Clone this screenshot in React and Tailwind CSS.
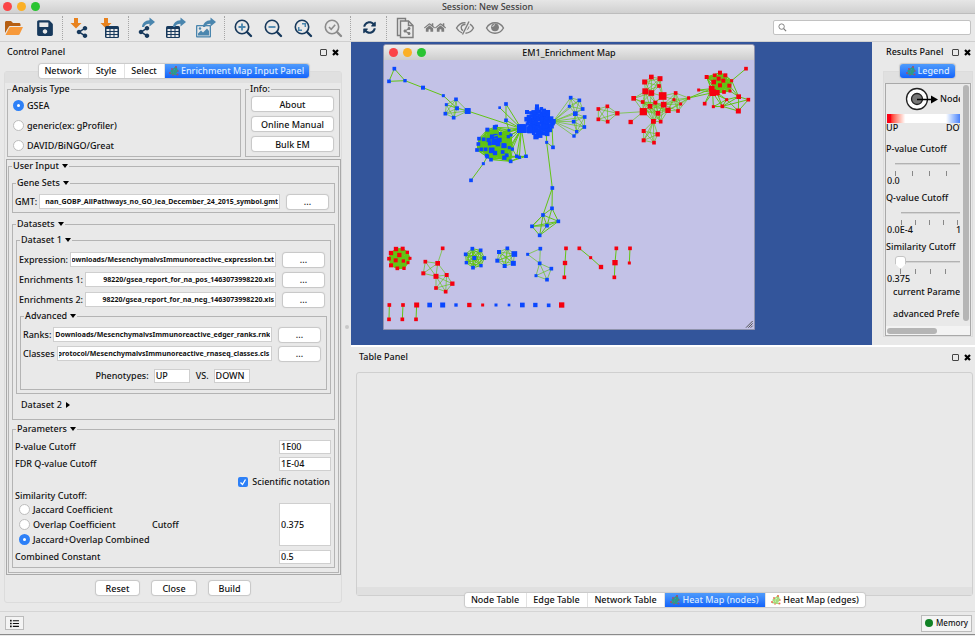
import React from "react";
import { FaSave, FaShareAlt, FaHome, FaSyncAlt, FaList } from "react-icons/fa";

/* ---------- network drawing ---------- */

const GREEN = "#62c414";
const BLUE = "#0a47ff";
const RED = "#f5000f";

function Cluster({ color, nodes, edges = [], clique = [], dx = 0, dy = 0, width = 3 }) {
  const lines = [...edges];
  clique.forEach(([from, to]) => {
    for (let i = from; i <= to; i++) for (let j = i + 1; j <= to; j++) lines.push([i, j]);
  });
  return (
    <g transform={`translate(${dx} ${dy})`}>
      <path
        d={lines.map(([a, b]) => `M${nodes[a][0]} ${nodes[a][1]}L${nodes[b][0]} ${nodes[b][1]}`).join("")}
        stroke={GREEN}
        strokeWidth={width}
        fill="none"
      />
      {nodes.map(([x, y, s = 11, c = color], i) => (
        <rect key={i} x={x - s / 2} y={y - s / 2} width={s} height={s} fill={c} />
      ))}
    </g>
  );
}

const core = Array.from({ length: 60 }, (_, i) => {
  const r = 40 * Math.sqrt((i + 1) / 60);
  const a = i * 2.39996;
  return [479 + r * Math.cos(a), 187 + r * Math.sin(a) * 1.05, i % 3 === 0 ? 10 : 14];
});

const pathway = [
  [322, 209, 12], [345, 202, 13], [311, 238], [297, 236], [326, 240, 13], [336, 230, 13], [347, 228, 13],
  [358, 240, 14], [344, 245, 20], [354, 252, 14], [295, 252], [329, 251], [372, 257, 15], [361, 221, 9],
  [388, 263, 9], [291, 270], [304, 268], [317, 268], [335, 271, 17], [368, 276], [345, 279, 13], [320, 287],
  [333, 299], [373, 293, 13], [380, 286, 9], [392, 304], [385, 230, 9], [393, 225, 8], [387, 211, 8],
  [397, 267, 9], [410, 289, 10], [418, 292, 9], [438, 289, 10], [424, 206, 26], [349, 199, 10],
];

const hubX = [
  [424, 206, 26], [378, 132], [359, 143, 8], [378, 181], [387, 211, 8], [385, 230, 9], [393, 225, 8],
  [410, 289, 10], [418, 292, 9], [438, 289, 10], [372, 257, 14], [388, 263, 9], [397, 267, 9], [263, 153, 17],
  [361, 221, 9], [345, 202], [336, 230], [380, 286],
];

function Network() {
  return (
    <svg viewBox="0 0 1110 807" className="block w-full" role="img" aria-label="Enrichment map network">
      <Cluster
        dx={-12}
        color={BLUE}
        nodes={[[43, 26], [27, 64], [75, 62, 10], [129, 83, 12], [190, 107, 9], [231, 145]]}
        edges={[[0, 1], [0, 2], [1, 2], [2, 3], [3, 4], [4, 5]]}
      />
      <Cluster
        dx={-12}
        color={BLUE}
        nodes={[[228, 118], [199, 134, 9], [231, 145], [196, 161], [221, 173], [263, 153, 17]]}
        clique={[[0, 5]]}
        width={2}
      />
      <Cluster dx={-12} color={BLUE} nodes={pathway} clique={[[0, 29]]} edges={[[25, 32], [25, 31], [29, 30], [30, 32], [21, 30], [22, 30], [23, 32]]} />
      <Cluster dx={-12} color={BLUE} nodes={hubX} edges={hubX.slice(1).map((_, i) => [0, i + 1]).concat([[1, 3], [3, 4]])} />
      <Cluster dx={-12} color={BLUE} nodes={[[322, 290], [310, 311, 9], [273, 361]]} edges={[[0, 1], [1, 2]]} />
      <Cluster
        dx={-12}
        color={BLUE}
        width={2}
        nodes={[
          [572, 113], [598, 121], [568, 139, 9], [608, 147], [586, 161, 14], [614, 171], [581, 185],
          [613, 201], [590, 215, 10], [582, 228, 10], [520, 184, 14],
        ]}
        clique={[[0, 4], [4, 8]]}
        edges={[0, 1, 2, 3, 4, 5, 6, 7, 8, 9].map((i) => [i, 10]).concat([[8, 9], [7, 9]])}
      />
      <Cluster
        dx={-12}
        color={BLUE}
        nodes={[[497, 180], [500, 247, 9], [519, 262], [516, 200], [517, 384], [516, 445], [489, 465], [456, 499], [501, 497], [535, 484], [479, 526]]}
        edges={[[0, 1], [1, 2], [2, 3], [1, 4], [4, 5], [4, 6], [5, 6], [5, 8], [5, 9], [6, 7], [6, 8], [6, 9], [7, 8], [7, 9], [7, 10], [8, 9], [8, 10], [9, 10], [6, 10], [7, 6]]}
      />
      <Cluster dx={-12} color={BLUE} nodes={[...core, [441, 156, 12], [471, 139, 12], [468, 230, 16], [519, 184, 14], [428, 206, 25], [449, 210, 18]]} />

      <Cluster
        dx={618}
        color={RED}
        nodes={[[52, 139], [25, 147], [25, 178], [53, 185], [82, 160, 13], [160, 155, 21], [122, 186, 13]]}
        clique={[[0, 4]]}
        edges={[[4, 5], [5, 6]]}
        width={2}
      />
      <Cluster
        dx={618}
        color={RED}
        width={2}
        nodes={[
          [184, 51, 14], [210, 56, 15], [164, 66, 15], [207, 78], [166, 94, 18], [184, 99, 17], [218, 108, 23],
          [131, 115, 14], [158, 126], [180, 139, 14], [196, 128, 12], [221, 134, 17], [204, 160, 14],
          [234, 151, 16], [190, 184, 14], [212, 185], [160, 155, 21], [257, 99], [252, 119, 9], [272, 132, 9],
          [264, 153], [296, 114, 9],
        ]}
        clique={[[0, 5], [8, 15], [17, 21]]}
        edges={[
          [6, 1], [6, 3], [6, 5], [6, 11], [6, 10], [6, 17], [6, 18], [6, 9], [7, 4], [7, 5], [7, 8], [7, 16], [7, 9],
          [16, 4], [16, 8], [16, 9], [16, 10], [16, 12], [16, 14], [16, 11], [4, 8], [4, 9], [5, 10], [5, 9], [8, 5],
          [13, 17], [13, 18], [13, 19], [13, 20], [11, 17], [11, 19], [11, 18], [11, 20], [13, 21], [11, 21], [16, 13], [4, 10],
        ]}
      />
      <Cluster
        dx={618}
        color={RED}
        width={2}
        nodes={[[190, 184, 14], [161, 213, 12], [203, 223, 13], [161, 241, 12], [192, 248, 11], [180, 215, 1, GREEN]]}
        clique={[[0, 4]]}
        edges={[[5, 0], [5, 3], [5, 4]]}
      />
      <Cluster
        dx={618}
        color={RED}
        nodes={[
          [390, 38, 12], [374, 46], [406, 46, 12], [350, 51, 12], [386, 56, 12], [371, 66, 14], [400, 62, 12],
          [390, 76, 12], [418, 77, 12], [365, 86, 17], [368, 98, 20], [381, 98, 16], [402, 96], [425, 62, 9], [420, 93, 9],
          [468, 26], [326, 90, 9], [296, 114, 9], [344, 131], [370, 140, 9], [397, 139], [410, 119, 9],
          [446, 110, 14], [475, 119], [445, 153, 15],
        ]}
        clique={[[0, 14]]}
        edges={[[13, 15], [16, 10], [17, 10], [17, 9], [16, 9], [18, 10], [19, 10], [20, 10], [21, 10], [21, 11], [20, 11], [13, 22], [14, 22], [22, 23], [22, 24], [23, 24], [20, 22], [21, 24], [20, 24], [20, 21], [19, 21], [21, 22], [20, 23], [18, 9], [8, 22], [19, 20]]}
        width={3}
      />

      <Cluster
        dx={-12}
        dy={360}
        color={RED}
        width={4}
        nodes={[
          [48, 207, 13], [68, 206, 12], [33, 219, 13], [82, 217, 10], [58, 225, 13], [27, 236], [90, 235, 9], [47, 241, 12],
          [70, 243, 10], [84, 248, 9], [33, 256, 12], [52, 265], [72, 265, 10],
        ]}
        clique={[[0, 12]]}
      />
      <Cluster
        dx={-12}
        dy={360}
        color={RED}
        width={2}
        nodes={[[188, 205], [173, 250, 14], [136, 245], [130, 280, 12], [168, 289, 15], [200, 285, 12], [217, 311, 13], [168, 324], [197, 335]]}
        clique={[[1, 4], [4, 8]]}
        edges={[[0, 1], [1, 5]]}
      />
      <Cluster
        dx={-12}
        dy={360}
        color={BLUE}
        width={3}
        nodes={[[277, 206], [302, 211], [257, 223], [313, 234], [283, 234, 12], [259, 248, 10], [303, 257, 10], [279, 263]]}
        clique={[[0, 7]]}
      />
      <Cluster
        dx={-12}
        dy={360}
        color={BLUE}
        width={2}
        nodes={[[382, 205], [357, 216, 12], [403, 222, 17], [352, 242, 12], [400, 250, 15], [374, 258, 12], [380, 232, 1, GREEN]]}
        clique={[[0, 6]]}
      />
      <Cluster
        dx={-12}
        dy={360}
        color={BLUE}
        nodes={[[481, 206], [443, 223, 9], [479, 250], [514, 266], [468, 287, 9], [501, 299]]}
        clique={[[0, 2], [2, 5]]}
        width={2}
      />
      <Cluster
        dx={-12}
        dy={360}
        color={RED}
        nodes={[
          [558, 205], [555, 249, 13], [553, 292], [598, 205], [632, 233, 9], [663, 261, 13], [709, 205], [705, 248, 16],
          [703, 292], [750, 205], [748, 249, 9], [28, 375], [27, 418], [69, 375], [67, 418], [110, 375, 15], [108, 418],
        ]}
        edges={[[0, 1], [1, 2], [3, 4], [4, 5], [6, 7], [7, 8], [9, 10], [11, 12], [13, 14], [15, 16]]}
      />
      <Cluster
        dx={-12}
        dy={360}
        color={BLUE}
        nodes={[
          [149, 375, 14], [188, 375, 15], [228, 375, 10], [268, 375, 13, RED], [308, 375, 9, RED], [348, 375, 9],
          [387, 375, 8], [427, 375, 14], [466, 375, 13], [506, 376, 11], [545, 375, 16, RED],
        ]}
      />
      <path d="M1086 803l20-20M1093 803l13-13M1100 803l6-6" stroke="#555" strokeWidth="3" />
    </svg>
  );
}

/* ---------- toolbar icons ---------- */

const NAVY = "#17395c";
const STEEL = "#4a86ae";
const ORANGE = "#e8821e";
const GRAY = "#7d7d7d";

const Icon = ({ children }) => (
  <svg viewBox="0 0 24 24" className="block size-6" aria-hidden="true">
    {children}
  </svg>
);

const DownArrow = () => <path d="M6 1h4v5h3.500L8 11.500 2.500 6H6z" transform="translate(-1 1)" fill={ORANGE} />;
const CurveArrow = () => (
  <path d="M14.500 1.500L20 6l-5.500 4.500V7.800c-3 0-4.500 1-5.500 3.200-.8 0-1.500 0-2 0C7.300 7 10 4.400 14.500 4.200z" fill={STEEL} />
);

const FolderIcon = () => (
  <Icon>
    <path d="M2 17V6.500C2 5.600 2.600 5 3.500 5H8l2 2h6c.900 0 1.500.6 1.500 1.500V10H7.500c-1 0-1.600.4-2 1.200z" fill="#b55e12" />
    <path d="M2.500 19l3.700-7.200c.3-.6.8-.8 1.300-.8H20l-3.400 7.200c-.3.5-.7.8-1.300.8z" fill="#f7993a" />
  </Icon>
);

const Share = ({ x, y }) => <FaShareAlt x={x} y={y} size={12} color={NAVY} />;
const Grid = ({ x, y }) => (
  <g transform={`translate(${x} ${y})`}>
    <rect width="14" height="12" rx="1.500" fill={NAVY} />
    <path d="M1.500 3h3v2h-3zM5.500 3h3v2h-3zM9.500 3h3v2h-3zM1.500 6h3v2h-3zM5.500 6h3v2h-3zM9.500 6h3v2h-3zM1.500 9h3v2h-3zM5.500 9h3v2h-3zM9.500 9h3v2h-3z" fill="#e9e9e9" />
  </g>
);

const ImportNetwork = () => (
  <Icon>
    <DownArrow />
    <Share x={7} y={10} />
  </Icon>
);
const ImportTable = () => (
  <Icon>
    <DownArrow />
    <Grid x={6} y={10} />
  </Icon>
);
const ExportNetwork = () => (
  <Icon>
    <Share x={3} y={10} />
    <CurveArrow />
  </Icon>
);
const ExportTable = () => (
  <Icon>
    <Grid x={1} y={10} />
    <g transform="translate(1 0)">
      <CurveArrow />
    </g>
  </Icon>
);
const ExportImage = () => (
  <Icon>
    <rect x="1" y="9" width="15" height="12.500" rx="1" fill={STEEL} />
    <rect x="2.300" y="10.300" width="12.400" height="9.900" fill="#e9e9e9" />
    <path d="M3 19.500v-2l3-3 2 2 4-4 2 2.500v4.500z" fill={STEEL} />
    <circle cx="5" cy="12.500" r="1.200" fill={STEEL} />
    <g transform="translate(1 0)">
      <CurveArrow />
    </g>
  </Icon>
);

const Magnifier = ({ color = NAVY, children }) => (
  <Icon>
    <circle cx="11" cy="11" r="6.700" fill="none" stroke={color} strokeWidth="1.600" />
    <path d="M16 16l4 4" stroke={color} strokeWidth="2.400" strokeLinecap="round" />
    {children}
  </Icon>
);
const ZoomIn = () => (
  <Magnifier>
    <path d="M11 7.500v7M7.500 11h7" stroke={STEEL} strokeWidth="1.800" />
  </Magnifier>
);
const ZoomOut = () => (
  <Magnifier>
    <path d="M7.500 11h7" stroke={STEEL} strokeWidth="1.800" />
  </Magnifier>
);
const ZoomFit = () => (
  <Magnifier>
    <path d="M11 7.700h3.300V11M11 14.300H7.700V11" fill="none" stroke={STEEL} strokeWidth="1.500" />
  </Magnifier>
);
const ZoomSelected = () => (
  <Magnifier color="#8c8c8c">
    <path d="M8 11l2.200 2.300 4-4.600" fill="none" stroke="#8c8c8c" strokeWidth="1.600" />
  </Magnifier>
);
const CopyNetwork = () => (
  <Icon>
    <g fill="none" stroke={GRAY} strokeWidth="1.400">
      <path d="M7 19.500H4.500v-17h8V5" />
      <path d="M7.500 5h8l4.500 4.500v12H7.500z" fill="#e9e9e9" />
      <path d="M15.500 5v4.500H20" />
    </g>
    <FaShareAlt x={10} y={11} size={8} color={GRAY} />
  </Icon>
);
const Houses = () => (
  <Icon>
    <FaHome x={1} y={6} size={11} color={GRAY} />
    <FaHome x={12} y={6} size={11} color={GRAY} />
  </Icon>
);
const EyeIcon = () => (
  <Icon>
    <path d="M3.500 12C5.500 8.500 8.500 6.800 12 6.800s6.500 1.700 8.500 5.200c-2 3.500-5 5.200-8.500 5.200S5.500 15.500 3.500 12z" fill="none" stroke={GRAY} strokeWidth="1.400" />
    <circle cx="12" cy="11.300" r="3.900" fill={GRAY} />
    <path d="M9.800 11c0-1.300.9-2.200 2.200-2.200" fill="none" stroke="#e9e9e9" strokeWidth=".9" />
  </Icon>
);
const HiddenEyeIcon = () => (
  <Icon>
    <path d="M12.500 6.800C8.800 6.500 5.500 8.500 3.500 12c1.400 2.500 3.200 4 5.500 4.800M17 8.200c1.400.9 2.600 2.200 3.500 3.800-1.800 3.200-4.600 5-8 5.200" fill="none" stroke={GRAY} strokeWidth="1.400" />
    <path d="M12.500 8.500c-2.300-.4-4.200 1-4.300 3 0 1.500.7 2.500 1.800 3.100" fill="none" stroke={GRAY} strokeWidth="1.400" />
    <path d="M16 5.500L9.500 18.500" stroke={GRAY} strokeWidth="1.400" />
    <path d="M16.300 9.500c.3 2.300-.7 4-2.800 5z" fill={GRAY} />
  </Icon>
);

const EnrichIcon = ({ faint }) => (
  <svg viewBox="0 0 10 10" className="size-[10px] shrink-0" aria-hidden="true">
    <path d="M7 1L2 5l3 3 3.500-3L7 1 5 8M2 5h6.500M1 7.500l4 .5 3 .5" stroke={faint ? "#a5dc7c" : "#2f9a83"} strokeWidth="1.300" fill="none" />
    <g fill={faint ? "#ec6a50" : "#a84a70"}>
      <circle cx="7" cy="1" r="1" />
      <circle cx="3" cy="3" r=".9" />
      <circle cx="1" cy="7" r="1" />
      <circle cx="4" cy="9" r=".8" />
      <circle cx="9" cy="5" r=".8" />
      <circle cx="8.500" cy="8.500" r="1" />
    </g>
  </svg>
);

/* ---------- controls ---------- */

const ToolButton = ({ label, children }) => (
  <button type="button" aria-label={label} className="flex w-[30px] shrink-0 items-center justify-center">
    {children}
  </button>
);
const Separator = () => <div className="ml-[2px] mr-[3px] h-6 shrink-0 border-l border-dotted border-[#a5a5a5]" />;

const Lights = () => (
  <div className="flex gap-[5px]">
    <span className="size-[9px] rounded-full bg-[#fb4647]" />
    <span className="size-[9px] rounded-full bg-[#fbb026]" />
    <span className="size-[9px] rounded-full bg-[#2ac432]" />
  </div>
);

const PanelHeader = ({ title }) => (
  <div className="flex h-5 items-center gap-[5px] pr-[4px]">
    <h2 className="mr-auto whitespace-nowrap">{title}</h2>
    <button type="button" aria-label={`Float ${title}`} className="size-[7px] rounded-[1px] border border-[#444]" />
    <button type="button" aria-label={`Close ${title}`}>
      <svg viewBox="0 0 7 7" className="size-[7px]">
        <path d="M1 1l5 5M6 1L1 6" stroke="#000" strokeWidth="2.200" />
      </svg>
    </button>
  </div>
);

const Tab = ({ width, selected, icon, children }) => (
  <button
    type="button"
    role="tab"
    aria-selected={!!selected}
    className={`flex h-[14px] items-center justify-center gap-[2px] whitespace-nowrap border-r border-[#e2e2e2] last:border-r-0 ${width} ${
      selected ? "bg-linear-to-b from-[#4f9bfb] to-[#1463fb] text-[#dcebff]" : "bg-white"
    }`}
  >
    {icon}
    {children}
  </button>
);
const Tabs = ({ children }) => (
  <div role="tablist" className="flex overflow-hidden rounded-[3px] shadow-[0_0_1px_1px_#c9c9c9]">
    {children}
  </div>
);

const Push = ({ width, label, children }) => (
  <button
    type="button"
    aria-label={label}
    className={`h-[14px] shrink-0 rounded-[3px] bg-white leading-[13px] shadow-[0_0_1px_1px_#c6c6c6] ${width}`}
  >
    {children}
  </button>
);

const Radio = ({ name, label, checked }) => (
  <label className="flex h-[15px] items-center gap-[3px] whitespace-nowrap">
    <input
      type="radio"
      name={name}
      defaultChecked={checked}
      className="size-[11px] shrink-0 appearance-none rounded-full border border-[#bdbdbd] bg-white checked:border-4 checked:border-[#2d80f7]"
    />
    {label}
  </label>
);

const Group = ({ title, open, className = "", inner = "", children }) => (
  <fieldset className={`min-w-0 border border-[#b4b4b4] ${className}`}>
    <legend className="ml-[3px] h-3 px-[1px] leading-3">
      {title}
      {open && <span className="ml-[3px] inline-block border-x-[3px] border-t-4 border-x-transparent border-t-black align-[1px]" />}
    </legend>
    <div className={inner}>{children}</div>
  </fieldset>
);

const showEnd = (el) => {
  if (el) el.scrollLeft = el.scrollWidth;
};

const FileRow = ({ id, label, value }) => (
  <div className="flex h-[15px] items-center pl-[2px] pr-[6px]">
    <label htmlFor={id} className="mr-[2px] whitespace-nowrap">
      {label}
    </label>
    <input
      id={id}
      ref={showEnd}
      defaultValue={value}
      className="mr-[7px] h-[15px] min-w-0 flex-1 border border-[#cfcfcf] bg-white px-[1px] text-right text-[7px] font-bold"
    />
    <Push width="w-[41px]" label={`Browse ${label}`}>
      ...
    </Push>
  </div>
);

const Field = ({ id, value, className }) => (
  <input id={id} defaultValue={value} className={`border border-[#cfcfcf] bg-white px-[1px] ${className}`} />
);

/* ---------- panels ---------- */

const ControlPanel = () => (
  <aside className="flex w-[343px] shrink-0 flex-col">
    <div className="pl-[7px]">
      <PanelHeader title="Control Panel" />
    </div>
    <div className="relative z-10 mt-[2px] flex justify-center pl-[4px]">
      <Tabs>
        <Tab width="w-[50px]">Network</Tab>
        <Tab width="w-[36px]">Style</Tab>
        <Tab width="w-[40px]">Select</Tab>
        <Tab width="w-[144px]" selected icon={<EnrichIcon />}>
          Enrichment Map Input Panel
        </Tab>
      </Tabs>
    </div>
    <div className="-mt-[7px] ml-1 mr-[1px] mb-2 flex-1 rounded-[3px] border border-[#dcdcdc] bg-[#e9e9e9]">
      <div className="h-[11px] bg-[#e0e0e0]" />
      <div className="flex gap-[4px] pl-[2px] pr-[1px]">
        <Group title="Analysis Type" className="flex-1" inner="flex flex-col gap-[5px] pl-[5px] pt-[3px] pb-[3px]">
          <Radio name="analysis" label="GSEA" checked />
          <Radio name="analysis" label="generic(ex: gProfiler)" />
          <Radio name="analysis" label="DAVID/BiNGO/Great" />
        </Group>
        <Group title="Info:" className="w-[95px]" inner="flex flex-col items-center gap-[6px] pt-[2px]">
          <Push width="w-[81px]">About</Push>
          <Push width="w-[81px]">Online Manual</Push>
          <Push width="w-[81px]">Bulk EM</Push>
        </Group>
      </div>
      <div className="mt-[2px] ml-[1px] border border-[#a9a9a9] px-[1px] pb-[1px]">
        <Group title="User Input" open inner="px-[3px] pb-[4px] pt-[5px]">
          <Group title="Gene Sets" open inner="pb-[3px] pt-[5px]">
            <FileRow id="gmt" label="GMT:" value="nan_GOBP_AllPathways_no_GO_iea_December_24_2015_symbol.gmt" />
          </Group>
          <Group title="Datasets" open className="mt-[5px]" inner="px-[3px] pt-1">
            <Group title="Dataset 1" open inner="pb-[3px] pt-[6px]">
              <div className="flex flex-col gap-[5px]">
                <FileRow id="expr" label="Expression:" value="Downloads/MesenchymalvsImmunoreactive_expression.txt" />
                <FileRow id="enr1" label="Enrichments 1:" value="98220/gsea_report_for_na_pos_1463073998220.xls" />
                <FileRow id="enr2" label="Enrichments 2:" value="98220/gsea_report_for_na_neg_1463073998220.xls" />
              </div>
              <Group title="Advanced" open className="mx-[3px] mt-[3px]" inner="pb-[6px] pt-[5px]">
                <div className="flex flex-col gap-[4px]">
                  <FileRow id="ranks" label="Ranks:" value="Downloads/MesenchymalvsImmunoreactive_edger_ranks.rnk" />
                  <FileRow id="classes" label="Classes" value="protocol/MesenchymalvsImmunoreactive_rnaseq_classes.cls" />
                </div>
                <div className="mt-2 flex h-[14px] items-center justify-center pr-[2px]">
                  <label htmlFor="ph1">Phenotypes:</label>
                  <Field id="ph1" value="UP" className="ml-[5px] h-[14px] w-9" />
                  <label htmlFor="ph2" className="ml-[6px]">
                    VS.
                  </label>
                  <Field id="ph2" value="DOWN" className="ml-[5px] h-[14px] w-9" />
                </div>
              </Group>
            </Group>
            <div className="mt-[3px] flex h-[22px] items-start pl-[5px] pt-[1px]">
              Dataset 2
              <span className="ml-1 mt-1 border-y-[3px] border-l-4 border-y-transparent border-l-black" />
            </div>
          </Group>
          <Group title="Parameters" open className="mt-[3px]" inner="pb-[3px] pl-[2px] pr-[3px] pt-[5px]">
            <div className="flex items-center justify-between">
              <label htmlFor="pv">P-value Cutoff</label>
              <Field id="pv" value="1E00" className="h-[14px] w-[52px]" />
            </div>
            <div className="mt-[3px] flex items-center justify-between">
              <label htmlFor="fdr">FDR Q-value Cutoff</label>
              <Field id="fdr" value="1E-04" className="h-[14px] w-[52px]" />
            </div>
            <label className="mt-[5px] flex h-3 items-center justify-end gap-1 pr-[1px]">
              <span className="relative flex">
                <input type="checkbox" defaultChecked className="size-[10px] appearance-none rounded-[2px] bg-[#2d80f7]" />
                <svg viewBox="0 0 10 10" className="pointer-events-none absolute inset-0 size-[10px]">
                  <path d="M2.500 5.500l2 2 3-5" stroke="#fff" strokeWidth="1.300" fill="none" />
                </svg>
              </span>
              Scientific notation
            </label>
            <div className="mt-[2px] leading-3">Similarity Cutoff:</div>
            <div className="flex items-center">
              <div className="w-[137px] pl-1">
                <Radio name="sim" label="Jaccard Coefficient" />
                <Radio name="sim" label="Overlap Coefficient" />
                <Radio name="sim" label="Jaccard+Overlap Combined" checked />
              </div>
              <label htmlFor="cut" className="flex-1">
                Cutoff
              </label>
              <Field id="cut" value="0.375" className="h-[43px] w-[52px]" />
            </div>
            <div className="mt-[3px] flex items-center justify-between">
              <label htmlFor="cc">Combined Constant</label>
              <Field id="cc" value="0.5" className="h-[14px] w-[52px]" />
            </div>
          </Group>
        </Group>
      </div>
      <div className="flex justify-center gap-[13px] py-[6px]">
        <Push width="w-[43px]">Reset</Push>
        <Push width="w-[44px]">Close</Push>
        <Push width="w-[41px]">Build</Push>
      </div>
    </div>
  </aside>
);

const Slider = ({ label, low, high, inset, ticks, thumb }) => (
  <div className="h-[49px]">
    <label className="block whitespace-nowrap leading-3">
      {label}
      <input
        type="range"
        defaultValue={0}
        className={`mt-[3px] block h-[13px] w-[130px] appearance-none bg-linear-to-b from-transparent from-40% via-[#a8a8a8] via-40% to-transparent to-55% ${inset} ${
          thumb
            ? "[&::-webkit-slider-thumb]:h-[13px] [&::-webkit-slider-thumb]:w-[11px] [&::-webkit-slider-thumb]:appearance-none [&::-webkit-slider-thumb]:rounded-t-[3px] [&::-webkit-slider-thumb]:border [&::-webkit-slider-thumb]:border-[#c4c4c4] [&::-webkit-slider-thumb]:bg-white [&::-webkit-slider-thumb]:[clip-path:polygon(0_0,100%_0,100%_60%,50%_100%,0_60%)]"
            : "[&::-webkit-slider-thumb]:appearance-none"
        }`}
      />
    </label>
    <div className={`flex h-[5px] ${inset} ${ticks}`}>
      {[0, 1, 2, 3, 4].map((i) => (
        <span key={i} className="w-px shrink-0 bg-[#888]" />
      ))}
    </div>
    <div className="flex leading-[10px]">
      <span className="w-[70px] shrink-0 pl-[1px]">{low}</span>
      <span>{high}</span>
    </div>
  </div>
);

const ResultsPanel = () => (
  <aside className="w-[103px] shrink-0 pb-2">
    <div className="pl-[14px]">
      <PanelHeader title="Results Panel" />
    </div>
    <div className="relative z-10 mt-[2px] flex justify-center pl-[8px]">
      <Tabs>
        <Tab width="w-[55px]" selected icon={<EnrichIcon />}>
          Legend
        </Tab>
      </Tabs>
    </div>
    <div className="-mt-[7px] ml-[11px] mr-[2px] border border-[#dcdcdc]">
      <div className="h-[11px] bg-[#e0e0e0]" />
      <div className="mx-[1px] border border-[#a9a9a9]">
        <div className="flex">
          <div className="h-[242px] w-[74px] overflow-hidden">
            <div className="flex h-[30px] items-center pl-[19px]">
              <svg viewBox="0 0 34 24" className="h-6 w-[34px] shrink-0" aria-hidden="true">
                <circle cx="12" cy="12" r="10.500" fill="#fff" stroke="#222" strokeWidth="1.300" />
                <circle cx="12" cy="12" r="5.500" fill="#777" stroke="#222" strokeWidth="1.300" />
                <path d="M12 12.500h16" stroke="#000" strokeWidth="1.500" />
                <path d="M26 8.500l7 4-7 4z" />
              </svg>
              <span className="ml-px whitespace-nowrap">Node Colour</span>
            </div>
            <div className="ml-px h-[9px] bg-linear-to-r from-[#fb0014] from-5% via-white via-25% to-white">
              <div className="ml-auto h-full w-[14px] bg-linear-to-r from-white to-[#4a80f8]" />
            </div>
            <div className="flex h-[10px] leading-[9px]">
              <span className="w-[60px] shrink-0">UP</span>
              <span>DOWN</span>
            </div>
            <div className="pt-[10px]">
              <Slider label="P-value Cutoff" low="0.0" high="" inset="ml-[9px]" ticks="gap-[16px]" />
              <Slider label="Q-value Cutoff" low="0.0E-4" high="1" inset="ml-[15px]" ticks="gap-[13px]" />
              <Slider label="Similarity Cutoff" low="0.375" high="" inset="ml-[9px]" ticks="gap-[14px] pl-[5px]" thumb />
            </div>
            <button type="button" className="-mt-[5px] block whitespace-nowrap pl-[7px]">
              current Parameters
            </button>
            <button type="button" className="mt-[8px] block whitespace-nowrap pl-[7px]">
              advanced Preferences
            </button>
          </div>
          <div className="flex-1 pl-[3px]">
            <div className="mt-[1px] h-[236px] w-[6px] rounded-full bg-[#b5b5b5]" />
          </div>
        </div>
        <div className="flex h-[9px] items-center bg-[#f3f3f3] pl-[1px]">
          <div className="h-[6px] w-[50px] rounded-full bg-[#b5b5b5]" />
        </div>
      </div>
    </div>
  </aside>
);

const TablePanel = () => (
  <section className="flex flex-1 flex-col border-t-2 border-white">
    <div className="pl-2">
      <PanelHeader title="Table Panel" />
    </div>
    <div className="mx-[5px] mr-[2px] mt-[5px] flex flex-1 flex-col justify-end rounded-[3px] border border-[#cfcfcf] bg-[#e9e9e9]">
      <div className="h-2 bg-[#e0e0e0]" />
    </div>
    <div className="relative z-10 -mt-[3px] mb-[4px] flex justify-center pl-[3px]">
      <Tabs>
        <Tab width="w-[62px]">Node Table</Tab>
        <Tab width="w-[61px]">Edge Table</Tab>
        <Tab width="w-[77px]">Network Table</Tab>
        <Tab width="w-[101px]" selected icon={<EnrichIcon />}>
          Heat Map (nodes)
        </Tab>
        <Tab width="w-[99px]" icon={<EnrichIcon faint />}>
          Heat Map (edges)
        </Tab>
      </Tabs>
    </div>
  </section>
);

export default function App() {
  return (
    <div className="flex min-h-screen flex-col bg-[#e9e9e9] font-['Noto_Sans','Open_Sans',sans-serif] text-[9px] font-medium leading-[14px] text-[#111]">
      <header className="relative flex h-[14px] items-center justify-center border-b border-[#bdbdbd] bg-linear-to-b from-[#e6e6e6] to-[#d0d0d0]">
        <div className="absolute left-[3px]">
          <Lights />
        </div>
        <h1 className="text-[#404040]">Session: New Session</h1>
      </header>

      <nav aria-label="Toolbar" className="flex h-7 items-center border-b border-[#cfcfcf] pr-1">
        <ToolButton label="Open session"><FolderIcon /></ToolButton>
        <ToolButton label="Save session"><FaSave size={18} color={NAVY} /></ToolButton>
        <Separator />
        <ToolButton label="Import network"><ImportNetwork /></ToolButton>
        <ToolButton label="Import table"><ImportTable /></ToolButton>
        <Separator />
        <ToolButton label="Export network"><ExportNetwork /></ToolButton>
        <ToolButton label="Export table"><ExportTable /></ToolButton>
        <ToolButton label="Export image"><ExportImage /></ToolButton>
        <Separator />
        <ToolButton label="Zoom in"><ZoomIn /></ToolButton>
        <ToolButton label="Zoom out"><ZoomOut /></ToolButton>
        <ToolButton label="Fit content"><ZoomFit /></ToolButton>
        <ToolButton label="Fit selected"><ZoomSelected /></ToolButton>
        <Separator />
        <ToolButton label="Refresh"><FaSyncAlt size={13} color={NAVY} /></ToolButton>
        <Separator />
        <ToolButton label="New network from selection"><CopyNetwork /></ToolButton>
        <ToolButton label="First neighbors"><Houses /></ToolButton>
        <ToolButton label="Hide selected"><HiddenEyeIcon /></ToolButton>
        <ToolButton label="Show all"><EyeIcon /></ToolButton>
        <label className="ml-auto flex h-[15px] w-[198px] items-center rounded-[2px] border border-[#c2c2c2] bg-white pl-1">
          <svg viewBox="0 0 10 10" className="size-[9px]" aria-hidden="true">
            <circle cx="4" cy="4" r="3" fill="none" stroke="#777" />
            <path d="M6.300 6.300L9 9" stroke="#777" strokeWidth="1.300" />
          </svg>
          <input type="search" aria-label="Search" className="min-w-0 flex-1 bg-transparent px-1 outline-none" />
        </label>
      </nav>

      <div className="flex flex-1">
        <ControlPanel />
        <div className="flex w-2 shrink-0 items-center justify-center">
          <span className="size-1 rounded-full bg-[#c8c8c8]" />
        </div>
        <div className="flex min-w-0 flex-1 flex-col">
          <div className="flex">
            <main className="relative min-w-0 flex-1 bg-[#33559b]">
              <section className="absolute left-8 top-[2px] w-[372px] overflow-hidden rounded-t-[3px] border border-[#8f93ad] bg-[#c3c2e7]">
                <div className="relative flex h-[15px] items-center justify-center bg-linear-to-b from-[#ededed] to-[#cecece]">
                  <div className="absolute left-[5px]">
                    <Lights />
                  </div>
                  <h2>EM1_Enrichment Map</h2>
                </div>
                <Network />
              </section>
            </main>
            <ResultsPanel />
          </div>
          <TablePanel />
        </div>
      </div>

      <footer className="mb-[1px] flex h-6 items-center justify-between border-b border-t border-b-[#8a8a8a] border-t-[#d5d5d5] pl-[5px] pr-[3px]">
        <button type="button" aria-label="Task history" className="flex h-[14px] w-[19px] items-center justify-center border border-[#bbb] bg-[#f4f4f4]">
          <FaList size={9} />
        </button>
        <button type="button" className="flex h-[17px] w-[51px] items-center justify-center gap-[3px] border border-[#bbb] bg-[#f4f4f4] text-[8px]">
          <span className="size-[8px] rounded-full bg-[#118226]" />
          Memory
        </button>
      </footer>
    </div>
  );
}
